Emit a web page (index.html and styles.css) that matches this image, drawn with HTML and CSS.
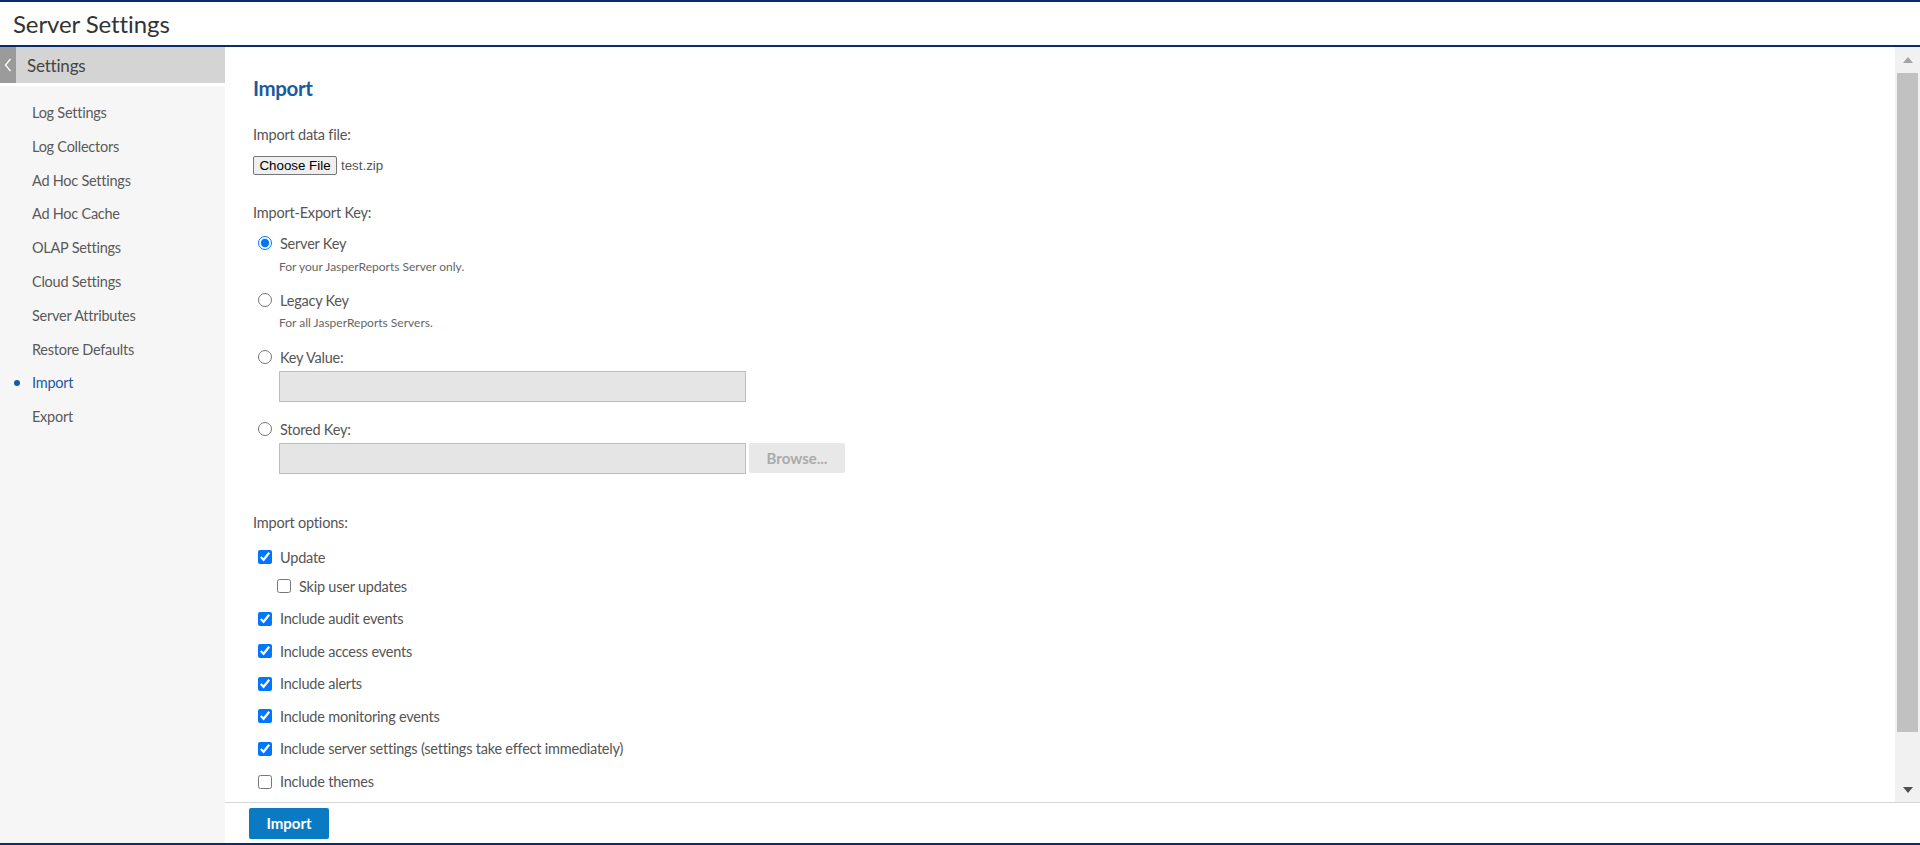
FILE: index.html
```html
<!DOCTYPE html>
<html lang="en">
<head>
  <meta charset="UTF-8">
  <title>Server Settings</title>
  <link rel="stylesheet" href="styles.css">
</head>
<body>
  <div class="app">
    <header class="topbar">
      <h1 class="title">Server Settings</h1>
    </header>

    <div class="body">
      <aside class="sidebar">
        <div class="side-head">
          <span class="side-tab">
            <svg width="8" height="14" viewBox="0 0 8 14"><polyline points="6.5,1 1.5,7 6.5,13" fill="none" stroke="#fff" stroke-width="1.3"/></svg>
          </span>
          <span class="side-title">Settings</span>
        </div>
        <ul class="side-nav">
          <li>Log Settings</li>
          <li>Log Collectors</li>
          <li>Ad Hoc Settings</li>
          <li>Ad Hoc Cache</li>
          <li>OLAP Settings</li>
          <li>Cloud Settings</li>
          <li>Server Attributes</li>
          <li>Restore Defaults</li>
          <li class="active">Import</li>
          <li>Export</li>
        </ul>
      </aside>

      <main class="main">
        <div class="scroll-area">
          <div class="content">
            <h2 class="section-title">Import</h2>

            <div class="field-label mt-24">Import data file:</div>
            <div class="file-row">
              <button class="file-btn">Choose File</button>
              <span class="file-name">test.zip</span>
            </div>

            <div class="field-label mt-28">Import-Export Key:</div>

            <label class="choice mt-10"><input type="radio" name="key" checked> Server Key</label>
            <div class="hint mt-6">For your JasperReports Server only.</div>

            <label class="choice mt-15"><input type="radio" name="key"> Legacy Key</label>
            <div class="hint mt-5">For all JasperReports Servers.</div>

            <label class="choice mt-16"><input type="radio" name="key"> Key Value:</label>
            <div class="key-row mt-4">
              <input class="key-input" type="text" disabled>
            </div>

            <label class="choice mt-17"><input type="radio" name="key"> Stored Key:</label>
            <div class="key-row mt-4">
              <input class="key-input" type="text" disabled>
              <button class="browse-btn" disabled>Browse...</button>
            </div>

            <div class="field-label mt-39">Import options:</div>

            <label class="choice mt-14"><input type="checkbox" checked> Update</label>
            <label class="choice sub mt-9"><input type="checkbox"> Skip user updates</label>
            <label class="choice opt"><input type="checkbox" checked> Include audit events</label>
            <label class="choice opt"><input type="checkbox" checked> Include access events</label>
            <label class="choice opt"><input type="checkbox" checked> Include alerts</label>
            <label class="choice opt"><input type="checkbox" checked> Include monitoring events</label>
            <label class="choice opt"><input type="checkbox" checked> Include server settings (settings take effect immediately)</label>
            <label class="choice opt"><input type="checkbox"> Include themes</label>
          </div>

          <div class="scrollbar">
            <div class="sb-btn sb-up"></div>
            <div class="sb-track"><div class="sb-thumb"></div></div>
            <div class="sb-btn sb-down"></div>
          </div>
        </div>

        <div class="footer">
          <button class="btn-primary">Import</button>
        </div>
      </main>
    </div>
  </div>
</body>
</html>
```

FILE: styles.css
```css
body {
  margin: 0;
  font-family: Lato, "Liberation Sans", sans-serif;
  color: #555;
  overflow: hidden;
}

.app {
  display: flex;
  flex-direction: column;
  height: 100vh;
}

/* Top bar */
.topbar {
  flex: none;
  height: 43px;
  display: flex;
  align-items: center;
  padding-left: 13px;
  border-top: 2px solid #0b2c6b;
  border-bottom: 2px solid #0b2c6b;
  background: #fff;
}

.title {
  margin: 0;
  font-size: 24px;
  font-weight: 400;
  color: #333;
  letter-spacing: -0.1px;
}

.body {
  flex: 1;
  display: flex;
  min-height: 0;
  border-bottom: 2px solid #0b2c6b;
}

/* Sidebar */
.sidebar {
  flex: none;
  width: 225px;
  background: #f6f6f6;
}

.side-head {
  display: flex;
  align-items: center;
  height: 36px;
  background: #d4d4d4;
  border-bottom: 3px solid #fff;
}

.side-tab {
  align-self: stretch;
  width: 16px;
  display: flex;
  align-items: center;
  justify-content: center;
  background: #9b9b9b;
}

.side-title {
  padding-left: 11px;
  font-size: 17px;
  color: #444;
  letter-spacing: -0.2px;
}

.side-nav {
  list-style: none;
  margin: 0;
  padding: 10px 0 0;
}

.side-nav li {
  position: relative;
  padding-left: 32px;
  line-height: 33.8px;
  font-size: 14.5px;
  letter-spacing: -0.25px;
  color: #5a5a5a;
}

.side-nav li.active {
  color: #1a5aa3;
}

.side-nav li.active::before {
  content: "";
  position: absolute;
  left: 14px;
  top: 50%;
  width: 6px;
  height: 6px;
  margin-top: -3px;
  border-radius: 50%;
  background: #1a5aa3;
}

/* Main area */
.main {
  flex: 1;
  display: flex;
  flex-direction: column;
  min-width: 0;
}

.scroll-area {
  flex: 1;
  display: flex;
  min-height: 0;
}

.content {
  flex: 1;
  overflow: hidden;
  padding: 28px 0 0 28px;
}

.section-title {
  margin: 0;
  font-size: 20.5px;
  line-height: 26px;
  font-weight: 700;
  letter-spacing: -0.4px;
  color: #1a5aa3;
}

.field-label {
  font-size: 14.5px;
  line-height: 20px;
  letter-spacing: -0.2px;
}

.file-row {
  display: flex;
  align-items: center;
  height: 19px;
  margin-top: 11px;
}

.file-btn {
  width: 84px;
  height: 19px;
  padding: 0;
  font: 13.33px "Liberation Sans", Arial, sans-serif;
  color: #000;
  background: #efefef;
  border: 1px solid #767676;
  border-radius: 2px;
}

.file-name {
  margin-left: 4px;
  font: 13.33px "Liberation Sans", Arial, sans-serif;
  color: #555;
}

.choice {
  display: flex;
  align-items: center;
  height: 20px;
  padding-left: 5px;
  font-size: 14.5px;
  letter-spacing: -0.22px;
}

.choice input {
  width: 14px;
  height: 14px;
  margin: 0 8px 0 0;
}

.choice.sub {
  padding-left: 24px;
}

.choice.opt {
  margin-top: 12.6px;
}

.hint {
  margin-left: 26px;
  font-size: 12px;
  line-height: 16px;
  color: #666;
}

.key-row {
  display: flex;
  gap: 3px;
  margin-left: 26px;
}

.key-input {
  box-sizing: border-box;
  width: 467px;
  height: 31px;
  margin: 0;
  background: #e5e5e5;
  border: 1px solid #bdbdbd;
}

.browse-btn {
  width: 96px;
  height: 30px;
  border: none;
  border-radius: 2px;
  background: #e8e8e8;
  color: #ababab;
  font: 700 15px Lato, sans-serif;
}

.mt-4 { margin-top: 4px; }
.mt-5 { margin-top: 5px; }
.mt-6 { margin-top: 6px; }
.mt-9 { margin-top: 9px; }
.mt-10 { margin-top: 10px; }
.mt-14 { margin-top: 14px; }
.mt-15 { margin-top: 15px; }
.mt-16 { margin-top: 16px; }
.mt-17 { margin-top: 17px; }
.mt-24 { margin-top: 24px; }
.mt-28 { margin-top: 28px; }
.mt-39 { margin-top: 39px; }

/* Fake scrollbar */
.scrollbar {
  flex: none;
  width: 25px;
  display: flex;
  flex-direction: column;
  background: #f1f1f1;
}

.sb-btn {
  flex: none;
  height: 25px;
  display: flex;
  align-items: center;
  justify-content: center;
}

.sb-btn::before {
  content: "";
  border-left: 5.5px solid transparent;
  border-right: 5.5px solid transparent;
}

.sb-up::before {
  border-bottom: 6px solid #a3a3a3;
}

.sb-down::before {
  border-top: 6px solid #505050;
}

.sb-track {
  flex: 1;
  padding: 1px 2px 0;
}

.sb-thumb {
  height: 659px;
  background: #c1c1c1;
}

/* Footer */
.footer {
  flex: none;
  height: 40px;
  display: flex;
  align-items: center;
  padding-left: 24px;
  border-top: 1px solid #d6d6d6;
}

.btn-primary {
  width: 80px;
  height: 31px;
  border: none;
  border-radius: 2px;
  background: #0a7bc2;
  color: #fff;
  font: 700 15px Lato, sans-serif;
}
```
